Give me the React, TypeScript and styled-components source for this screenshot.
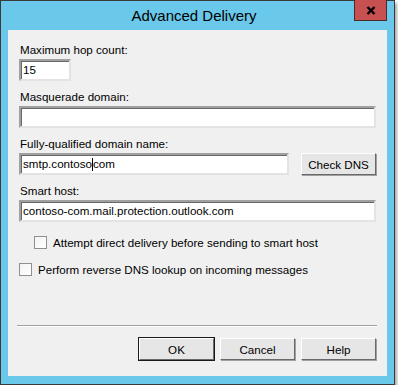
import React from 'react';
import styled, { createGlobalStyle } from 'styled-components';

const GlobalStyle = createGlobalStyle`
  html, body { margin: 0; padding: 0; background: #ffffff; }
  body { font-family: "Liberation Sans", Arial, sans-serif; }
  * { box-sizing: border-box; }
`;

const Window = styled.div`
  width: 395px; height: 385px;
  border: 1px solid #3a3a3a;
  background: #6ac9ea;
  padding: 0 7px 8px 7px;
  display: flex; flex-direction: column;
  box-shadow: 2px 3px 3px rgba(0,0,0,0.35);
`;

const TitleBar = styled.div`
  height: 29px; flex: none;
  display: grid; grid-template-columns: 1fr auto 1fr;
  align-items: start;
`;

const Title = styled.div`
  grid-column: 2;
  font-size: 15px; color: #000;
  line-height: 29px;
  margin-left: -7px;
`;

const CloseBtn = styled.div`
  grid-column: 3; justify-self: end;
  width: 33px; height: 21px; margin-top: -1px;
  background: #c75050;
  border: 1px solid #4e2a2a; border-top: none;
  display: flex; align-items: center; justify-content: center;
`;

const Client = styled.div`
  flex: 1;
  background: #f0f0f0;
  padding: 13px 11px 16px 11px;
  display: flex; flex-direction: column;
  font-size: 11.6px; color: #000;
`;

const Group = styled.div`
  display: flex; flex-direction: column; gap: 2px;
  margin-bottom: 9px;
`;

const Label = styled.div`
  line-height: 14px; height: 14px;
  padding-left: 1px;
`;

const Row = styled.div`
  display: flex; gap: 12px;
`;

const Field = styled.div<{ $w?: number; $grow?: boolean }>`
  height: 22px; flex: none;
  ${p => (p.$w ? `width: ${p.$w}px;` : '')}
  ${p => (p.$grow ? 'flex: 1 1 auto; min-width: 0;' : '')}
  background: #fff;
  border-style: solid; border-width: 2px;
  border-color: #a0a0a0 #e3e3e3 #e3e3e3 #a0a0a0;
  box-shadow: inset 1px 1px 0 #696969;
  padding: 0 2px 0 2px;
  line-height: 18px;
  white-space: nowrap; overflow: hidden;
`;

const Caret = styled.span`
  display: inline-block; width: 1px; height: 13px;
  background: #000; vertical-align: -3px;
`;

const Button = styled.div<{ $default?: boolean }>`
  width: 75px; height: 22px; flex: none;
  background: #e6e6e6;
  border-style: solid; border-width: 1px;
  border-color: #ffffff #696969 #696969 #ffffff;
  box-shadow: ${p => (p.$default ? '0 0 0 1px #1a1a1a' : '1px 1px 0 #a0a0a0')};
  display: flex; align-items: center; justify-content: center;
  font-size: 11.6px;
`;

const Check = styled.label<{ $indent?: number; $top: number }>`
  display: flex; align-items: center; gap: 6px;
  height: 14px;
  margin-top: ${p => p.$top}px;
  padding-left: ${p => p.$indent ?? 0}px;
`;

const Box = styled.span`
  width: 13px; height: 13px; flex: none;
  border: 1px solid #8e8f8f;
  background: linear-gradient(135deg, #f4f4f4, #ffffff);
`;

const Separator = styled.div`
  margin: auto 0 11px 0;
  height: 2px;
  border-top: 1px solid #a0a0a0;
  border-bottom: 1px solid #ffffff;
  margin-left: -2px; margin-right: -1px;
`;

const Buttons = styled.div`
  display: flex; justify-content: flex-end; gap: 6px;
`;

export default function App() {
  return (
    <>
      <GlobalStyle />
      <Window>
        <TitleBar>
          <Title>Advanced Delivery</Title>
          <CloseBtn>
            <svg width="10" height="9" viewBox="0 0 10 9">
              <path d="M1.5 1 L8.5 8 M8.5 1 L1.5 8" stroke="#000" strokeWidth="2.4" />
            </svg>
          </CloseBtn>
        </TitleBar>
        <Client>
          <Group>
            <Label>Maximum hop count:</Label>
            <Field $w={52}>15</Field>
          </Group>
          <Group>
            <Label>Masquerade domain:</Label>
            <Field />
          </Group>
          <Group>
            <Label>Fully-qualified domain name:</Label>
            <Row>
              <Field $grow>smtp.contoso<Caret />com</Field>
              <Button>Check DNS</Button>
            </Row>
          </Group>
          <Group>
            <Label>Smart host:</Label>
            <Field>contoso-com.mail.protection.outlook.com</Field>
          </Group>
          <Check $indent={15} $top={4}>
            <Box />
            Attempt direct delivery before sending to smart host
          </Check>
          <Check $indent={-1} $top={13}>
            <Box />
            Perform reverse DNS lookup on incoming messages
          </Check>
          <Separator />
          <Buttons>
            <Button $default>OK</Button>
            <Button>Cancel</Button>
            <Button>Help</Button>
          </Buttons>
        </Client>
      </Window>
    </>
  );
}
